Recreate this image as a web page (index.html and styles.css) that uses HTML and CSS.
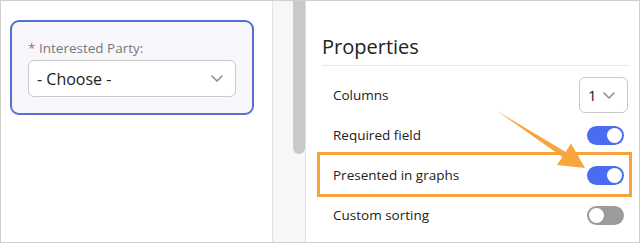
FILE: index.html
```html
<!DOCTYPE html>
<html>
<head>
    <title>Field Properties</title>
    <link rel="stylesheet" href="styles.css">
</head>
<body>
    <div class="frame">
        <!-- Form preview -->
        <div class="form-pane">
            <div class="field-card">
                <label class="field-label"><span class="req">*</span> Interested Party:</label>
                <div class="select select-wide">
                    <span>- Choose -</span>
                    <svg class="chevron" width="12" height="7" viewBox="0 0 12 7"><path d="M1 1l5 5 5-5" fill="none" stroke="#8f8f8f" stroke-width="1.6" stroke-linecap="round" stroke-linejoin="round"/></svg>
                </div>
            </div>
        </div>

        <div class="gutter"><div class="thumb"></div></div>

        <!-- Properties panel -->
        <div class="props-pane">
            <h2 class="props-title">Properties</h2>

            <div class="prop-row">
                <span>Columns</span>
                <div class="select select-small">
                    <span>1</span>
                    <svg class="chevron" width="12" height="7" viewBox="0 0 12 7"><path d="M1 1l5 5 5-5" fill="none" stroke="#8f8f8f" stroke-width="1.6" stroke-linecap="round" stroke-linejoin="round"/></svg>
                </div>
            </div>
            <div class="prop-row">
                <span>Required field</span>
                <div class="toggle on"><div class="knob"></div></div>
            </div>
            <div class="prop-row">
                <span>Presented in graphs</span>
                <div class="toggle on"><div class="knob"></div></div>
            </div>
            <div class="prop-row">
                <span>Custom sorting</span>
                <div class="toggle"><div class="knob"></div></div>
            </div>

            <div class="highlight"></div>
        </div>

        <svg class="arrow" width="640" height="243" viewBox="0 0 640 243">
            <polygon points="497,111 565.6,151.9 571,143.5 585,168 557,165 562.4,156.9" fill="#f7a53c"/>
        </svg>
    </div>
</body>
</html>
```

FILE: styles.css
```css
body { margin: 0; font-family: "Open Sans", "Noto Sans", sans-serif; color: #222; }
.frame { position: relative; display: flex; width: 640px; height: 243px; box-sizing: border-box; border: 1px solid #cfcfcf; background: #fff; overflow: hidden; }

.form-pane { width: 272px; flex: none; border-right: 1px solid #e2e2e2; padding: 19px 0 0 9px; box-sizing: border-box; }
.field-card { width: 244px; box-sizing: border-box; border: 2px solid #5470d4; border-radius: 9px; background: #f8f8fc; padding: 17px 16px 16px 16px; }
.field-label { display: block; font-size: 13.5px; line-height: 18px; color: #777; font-weight: 500; margin-bottom: 3px; }
.req { color: #c75a72; }

.select { display: flex; align-items: center; justify-content: space-between; box-sizing: border-box; border: 1px solid #c9c9c9; border-radius: 6px; background: #fff; }
.select-wide { width: 208px; height: 37px; padding: 0 12px 0 8px; font-size: 16px; color: #222; }
.select-small { width: 49px; height: 36px; padding: 0 12px 0 8px; font-size: 15px; }

.gutter { width: 33px; flex: none; box-sizing: border-box; border-right: 1px solid #e2e2e2; background: #f7f7f7; display: flex; justify-content: flex-end; align-items: flex-start; }
.thumb { width: 12px; height: 153px; background: #c9c9c9; border-radius: 0 0 6px 6px; }

.props-pane { position: relative; flex: 1; padding: 32px 10px 0 16px; }
.props-title { margin: 0 0 9px; font-size: 20px; line-height: 28px; font-weight: 400; color: #222; padding-bottom: 4px; border-bottom: 1px solid #e6e6e6; }
.prop-row { display: flex; align-items: center; justify-content: space-between; height: 40px; padding: 0 5px 0 11px; font-size: 13.5px; font-weight: 500; }
.prop-row:first-of-type { padding-right: 1px; }

.toggle { position: relative; width: 37px; height: 19px; border-radius: 10px; background: #9b9b9b; }
.toggle.on { background: #4b6cf1; }
.knob { position: absolute; top: 2px; left: 2px; width: 15px; height: 15px; border-radius: 50%; background: #fff; }
.toggle.on .knob { left: auto; right: 2px; }

.highlight { position: absolute; left: 11px; top: 151px; width: 315px; height: 45px; box-sizing: border-box; border: 3px solid #f5a33c; }
.arrow { position: absolute; left: -1px; top: -1px; pointer-events: none; }
```
